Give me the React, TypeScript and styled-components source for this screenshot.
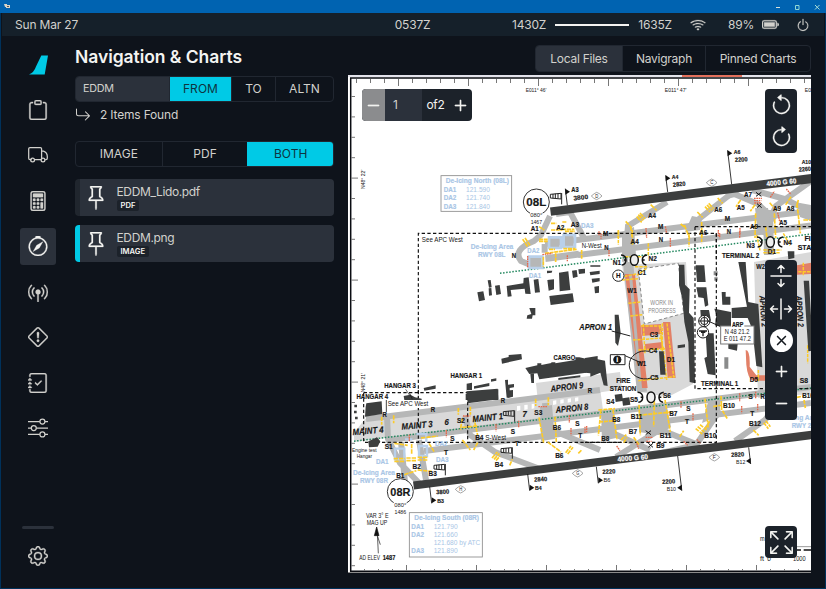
import React from 'react';
import styled, { createGlobalStyle } from 'styled-components';
import {
  BsClipboard, BsCalculator, BsCompass, BsBroadcastPin, BsExclamationDiamond,
  BsJournalCheck, BsGear, BsWifi, BsBatteryFull, BsPower, BsPin, BsArrowReturnRight,
  BsArrowCounterclockwise, BsArrowClockwise, BsPlus, BsDash, BsArrowsFullscreen, BsX,
} from 'react-icons/bs';

const color = {
  body: '#0e131b',
  bar: '#15202a',
  panel: '#2b313b',
  line: '#212731',
  text: '#d2d1cd',
  bright: '#f4f4f2',
  accent: '#00cae6',
  control: '#1c222a',
};

const GlobalStyle = createGlobalStyle`
  * { box-sizing: border-box; }
  body { margin: 0; background: ${color.body}; overflow: hidden; }
  svg { display: block; flex: none; }
`;

const Window = styled.div`
  width: 826px;
  height: 589px;
  display: flex;
  flex-direction: column;
  background: ${color.body};
  color: ${color.text};
  font: 12px/16px Inter, sans-serif;
  border: solid #00315a;
  border-width: 0 1px 1px;
`;

const TitleBar = styled.header`
  height: 13px;
  flex: none;
  margin: 0 -1px;
  padding: 0 5px 0 4px;
  display: flex;
  align-items: center;
  justify-content: space-between;
  background: #0063b1;
`;

const StatusBar = styled.div`
  height: 23px;
  flex: none;
  display: grid;
  grid-template-columns: 1fr auto 1fr;
  align-items: center;
  padding: 0 14px 0 13px;
  margin: 0 1px;
  letter-spacing: -0.18px;
  background: ${color.bar};
`;

const StatusGroup = styled.div`
  display: flex;
  align-items: center;
  justify-content: flex-end;
  svg { stroke: currentColor; stroke-width: 0.25; }
`;

const FlightLine = styled.span`
  width: 74px;
  height: 2px;
  margin: 0 9px;
  background: ${color.bright};
`;

const Gap = styled.span<{ $w: number }>`
  width: ${p => p.$w}px;
`;

const Body = styled.div`
  flex: 1;
  display: flex;
  min-height: 0;
`;

const Sidebar = styled.nav`
  width: 74px;
  display: flex;
  flex-direction: column;
  align-items: center;
  padding: 18px 0 4.5px;
`;

const Logo = styled.div`
  height: 37.5px;
  padding-left: 2px;
`;

const NavItem = styled.a<{ $active?: boolean }>`
  width: 36px;
  height: 36.5px;
  margin-bottom: 9px;
  display: grid;
  place-items: center;
  border-radius: 3px;
  color: ${p => (p.$active ? color.bright : color.text)};
  background: ${p => (p.$active ? color.panel : 'transparent')};
  svg { stroke: currentColor; stroke-width: 0.25; }
`;

const NavDivider = styled.div`
  width: 32px;
  height: 3px;
  border-radius: 2px;
  margin: auto 0 9.5px;
  background: ${color.panel};
`;

const Page = styled.main`
  flex: 1;
  display: flex;
  flex-direction: column;
  padding-right: 14px;
`;

const PageHead = styled.div`
  height: 39px;
  padding-top: 9px;
  display: flex;
  justify-content: space-between;
`;

const Title = styled.h1`
  margin: 0;
  font: 600 17.5px/24px Inter, sans-serif;
  letter-spacing: -0.05px;
  color: ${color.bright};
`;

const Segments = styled.div<{ $cols: string; $h?: number; $tight?: boolean }>`
  display: grid;
  grid-template-columns: ${p => p.$cols};
  height: ${p => p.$h ?? 26}px;
  border: 1px solid ${color.line};
  border-radius: 4px;
  overflow: hidden;
  letter-spacing: ${p => (p.$tight ? '-0.26px' : '0.05px')};
`;

const Segment = styled.button<{ $tone?: 'accent' | 'panel' }>`
  border: 0;
  border-left: 1px solid ${color.line};
  padding: 0;
  font: 12px/16px Inter, sans-serif;
  letter-spacing: inherit;
  color: ${p => (p.$tone === 'accent' ? '#0e3440' : color.text)};
  background: ${p => (p.$tone ? color[p.$tone] : 'transparent')};
  &:first-child { border-left: 0; }
  &:last-child { border-left-color: ${p => (p.$tone === 'accent' ? color.accent : color.line)}; }
`;

const SearchBox = styled.div`
  display: flex;
  align-items: center;
  padding-left: 7px;
  font-size: 10.8px;
  letter-spacing: -0.3px;
  background: ${color.panel};
`;

const Columns = styled.div`
  display: flex;
  justify-content: space-between;
`;

const FileColumn = styled.section`
  width: 259px;
  display: flex;
  flex-direction: column;
  padding-top: 0.6px;
`;

const Result = styled.div`
  display: flex;
  align-items: center;
  gap: 9px;
  margin: 5px 0 18.5px;
  height: 16px;
  letter-spacing: -0.18px;
`;

const FileCard = styled.article<{ $active?: boolean }>`
  height: 37px;
  margin-top: ${p => (p.$active ? 9 : 12)}px;
  display: flex;
  align-items: center;
  border-left: 5px solid ${p => (p.$active ? color.accent : '#20262e')};
  border-radius: 4px;
  background: ${color.panel};
  padding-left: 4px;
  svg { stroke: currentColor; stroke-width: 0.15; color: ${color.bright}; }
`;

const FileInfo = styled.div`
  padding-left: 8.5px;
  display: flex;
  flex-direction: column;
  align-items: flex-start;
  line-height: 14px;
  letter-spacing: -0.36px;
`;

const Badge = styled.span`
  height: 11px;
  margin-top: 1px;
  padding: 0 4px;
  border-radius: 2px;
  background: ${color.control};
  color: ${color.bright};
  font: 600 7.6px/11px Inter, sans-serif;
  letter-spacing: 0;
`;

const Viewer = styled.section`
  position: relative;
  width: 463px;
  height: 498px;
  overflow: hidden;
  background: #fff;
`;

const PageControl = styled.div`
  position: absolute;
  left: 14px;
  top: 14px;
  width: 110px;
  height: 32px;
  display: grid;
  grid-template-columns: 23px 37px 27px 23px;
  align-items: center;
  border-radius: 4px;
  overflow: hidden;
  background: ${color.control};
  color: ${color.text};
  svg { stroke: currentColor; stroke-width: 0.15; }
`;

const PageCell = styled.div<{ $bg?: string; $left?: boolean }>`
  height: 100%;
  display: flex;
  align-items: center;
  justify-content: ${p => (p.$left ? 'flex-start' : 'center')};
  padding-left: ${p => (p.$left ? 8 : 0)}px;
  font-size: 12px;
  letter-spacing: -0.3px;
  color: ${p => (p.$left ? color.text : color.bright)};
  background: ${p => p.$bg ?? 'transparent'};
`;

const ToolStack = styled.div<{ $top: number; $h: number; $pb?: number }>`
  position: absolute;
  left: 417px;
  top: ${p => p.$top}px;
  width: 32px;
  height: ${p => p.$h}px;
  padding-bottom: ${p => p.$pb ?? 0}px;
  display: flex;
  flex-direction: column;
  align-items: center;
  justify-content: space-around;
  border-radius: 4px;
  background: ${color.control};
  color: ${color.bright};
  svg { stroke: currentColor; stroke-width: 0.15; }
`;

const Round = styled.span`
  width: 23px;
  height: 23px;
  border-radius: 50%;
  display: grid;
  place-items: center;
  background: #fff;
  color: #14191f;
`;

const Turned = styled.span`
  transform: rotate(90deg);
`;

/* ---------- aerodrome chart ---------- */

type TProps = {
  x: number; y: number; w: number; s?: number; n?: boolean; i?: boolean; r?: number; c?: string; children: string;
};

const T = ({ x, y, w, s = 22.5, n, i, r = 0, c = '#171717', children }: TProps) => (
  <text
    x={x} y={y} fontSize={s} textLength={w} lengthAdjust="spacingAndGlyphs" textAnchor="middle"
    fontWeight={n ? 400 : 700} fontStyle={i ? 'italic' : 'normal'} fill={c}
    stroke={n ? 'none' : c} strokeWidth={0.5}
    transform={r ? `rotate(${r} ${x} ${y})` : undefined}
  >
    {children}
  </text>
);

const Sector = ({ x, y, children }: { x: number; y: number; children: React.ReactNode }) => (
  <g transform={`translate(${x} ${y}) scale(.33333)`}>{children}</g>
);

const P = ({ d, c, w = 3, dash }: { d: string; c: string; w?: number; dash?: string }) => (
  <path d={d} fill="none" stroke={c} strokeWidth={w} strokeDasharray={dash} />
);

const ICE = '#a9c6e6';
const YEL = '#fccb28';
const RED = '#e5694c';
const TAXI = '#b6b7b7';
const APRON = '#d9d9d9';
const DARK = '#3c3e3e';
const SALMON = '#e28067';

const Flag = ({ x, y, len, down, left }: { x: number; y: number; len: number; down?: boolean; left?: boolean }) => {
  const k = down ? 1 : -1;
  const top = y + k * len;
  const sx = x + k * len * 0.12;
  const dir = left ? -14 : 14;
  return (
    <g>
      <P d={`M${x} ${y}L${sx} ${top}`} c="#111" w={2.5} />
      <path d={`M${sx} ${top - (down ? 18 : 0)}l${dir} 9l${-dir} 9z`} fill="#111" />
    </g>
  );
};

const Sock = ({ x, y }: { x: number; y: number }) => (
  <g stroke="#222" strokeWidth="3" fill="none">
    <path d={`M${x} ${y + 2}l32 -3v17l-32 -3zM${x + 8} ${y + 1}v13M${x + 15} ${y}v13M${x + 23} ${y}v14M${x + 34} ${y - 2}v34`} />
  </g>
);

const Diamond = ({ x, y, t }: { x: number; y: number; t: string }) => (
  <g>
    <path d={`M${x - 16} ${y}q9 -8 16 -11q9 3 16 11q-8 8 -16 11q-9 -3 -16 -11z`} fill="#fff" stroke="#777" strokeWidth="2" />
    <T x={x} y={y + 5} w={9} s={14} n>{t}</T>
  </g>
);

const Ring = ({ x, y }: { x: number; y: number }) => (
  <g fill="none" stroke="#111" strokeWidth="4.5">
    <ellipse cx={x} cy={y} rx="12" ry="16" fill="#eee" />
    <path d={`M${x - 40} ${y - 15}q15 1 15 15q0 14 -13 15M${x - 31} ${y}h8M${x + 38} ${y - 15}q-14 2 -14 15q0 13 12 15M${x + 22} ${y}h9`} />
  </g>
);

const Roundel = ({ x, y, t }: { x: number; y: number; t: string }) => (
  <g>
    <circle cx={x} cy={y} r="39" fill="#fff" stroke="#333" strokeWidth="3" />
    <T x={x} y={y + 12} w={60} s={35}>{t}</T>
  </g>
);

const range = (n: number) => Array.from({ length: n }, (_, k) => k);

const ChartSheet = () => (
  <svg width="463" height="498" viewBox="348 75 463 498" fontFamily="'Liberation Sans Narrow', 'Liberation Sans', sans-serif">
    <path fill="#fff" d="M348 75h463v498h-463z" />

    {/* aprons and taxiways spanning several sectors */}
    <g fill={APRON}>
      <path d="M365 419L600 388L603 410L354 442V433z" />
      <path d="M536 383L620 372L622 389L538 402z" />
      <path d="M622 265L686 262L693 384L668 397L640 392z" />
      <path d="M754 262L811 252V394L758 398z" />
    </g>
    <g fill="none" stroke={TAXI} strokeWidth="6">
      <path d="M545 244L811 211M578 255L811 225.500M366 419L600 390M388 440L811 387M424 451L811 403" />
      <path d="M550 216L541 235L534 241Q512 250 521 261L533 266M556 214L570 212L585 240M667 202L628 226L625 262M732 193L690 226M732 193L758 204L775 220M752 190L785 199L811 212M811 181L776 206L763 235" />
      <path d="M387 415L388 439L400 463L420 484M401 442L405 482M419 440L426 480M465 416L470 435L495 452L540 469M545 403L547 428L600 450M605 415L606 430L650 450M648 405L654 427L696 444M661 429L616 457M715 397L718 413L696 445L640 458M777 404L765 420L735 441" />
      <path d="M628 262L642 392M768 210L769 255" strokeWidth="10" />
    </g>
    <g fill={TAXI}>
      <path d="M622 232l12-5 2 28-14 3zM755 208l13 0 3 26h-13zM540 407l12-2 3 34-14 2zM601 412l13-2 2 28-14 3zM639 409l28-2 4 20-12 8-20-3zM708 402l13-4-2 18-17 7zM692 216l10 2-2 12-15 2zM725 192l14 0-4 5-8 2zM800 203l11 2v16l-11-4z" />
    </g>
    <path d="M550 207.5L811 174V183.2L551 215.8z" fill="#3c3e3e" />
    <path d="M413 481.5L811 430.8V439.3L414 489.5z" fill="#3c3e3e" />
    <path d="M500 273.3L811 234M354 441.2L811 388" fill="none" stroke="#23885f" strokeWidth="1.5" strokeDasharray="1.5 1.6" />

    {/* north west */}
    <Sector x={345} y={70}>
      <T x={573} y={67} w={62} s={16} n>E011° 46′</T>
      <T x={60} y={328} w={58} s={16} n r={-90}>N48° 22′</T>
      <rect x="288" y="317" width="212" height="107" fill="#fff" stroke="#888" strokeWidth="2.5" />
      <T x={397} y={340} w={190} c={ICE}>De-Icing North (08L)</T>
      {['121.590', '121.740', '121.840'].map((f, k) => (
        <g key={f}>
          <T x={315} y={366 + k * 25} w={38} c={ICE}>{`DA${k + 1}`}</T>
          <T x={399} y={366 + k * 25} w={72} n c={ICE}>{f}</T>
        </g>
      ))}
      <Roundel x={574} y={396} t="08L" />
      <path d="M555 427h38v14h-38z" fill="#fff" />
      <T x={574} y={441} w={36} s={18} n>080°</T>
      <T x={574} y={463} w={34} s={18} n>1467</T>
      <Sock x={616} y={371} />
      <Flag x={667} y={406} len={50} />
      <T x={690} y={365} w={22} s={19}>A3</T>
      <T x={708} y={389} w={44} s={19} r={-7}>3800</T>
      <T x={727} y={474} w={38} c={ICE}>DA3</T>
    </Sector>

    {/* north east */}
    <Sector x={585} y={70}>
      <T x={272} y={67} w={65} s={16} n>E011° 47′</T>
      <T x={692} y={67} w={65} s={16} n>E011° 48′</T>
      <Flag x={248} y={366} len={50} />
      <T x={270} y={326} w={20} s={18}>A4</T>
      <T x={283} y={349} w={38} s={19} r={-5}>2820</T>
      <Flag x={440} y={343} len={102} />
      <T x={456} y={252} w={20} s={18}>A6</T>
      <T x={469} y={275} w={38} s={19} r={-3}>2200</T>
      <T x={664} y={281} w={28} s={18}>A10</T>
      <T x={660} y={304} w={36} s={19} r={-4}>2260</T>
      <T x={590} y={344} w={90} s={21} r={-6} c="#fff">4000 G 60</T>
      <Diamond x={35} y={378} t="D" />
      <Diamond x={380} y={338} t="C" />
      <P d="M197 404l18 17M155 440l15 17M160 434l15 17M165 429l15 17M122 454l18 20M398 384l15 16M360 410l15 16M366 405l15 16M371 400l15 16M337 426l16 16M287 462l15 12M467 390l-14 20M510 404l-14 20M512 430l-2 74M542 470l4 34M554 398l22 26M568 430l4 74M618 380l-16 24M640 390l-6 22M636 400l10 90M100 480v24M137 470l5 34M350 456v48M298 465l16 40M655 450h22" c={YEL} w={5} dash="14 3" />
      <P d="M556 382l12-18M604 357l14 16M578 428l6 26M241 469l4 22M183 474l2 30M404 489v16M464 484v20M48 490v16M507 385h24M507 392h22M508 399h20" c={RED} w={4} dash="5 2" />
      <path d="M513 367l16 12m0-12l-16 12M516 401l14 12m0-12l-14 12" stroke="#111" strokeWidth="3" />
      <T x={201} y={445} w={24}>A4</T>
      <T x={400} y={427} w={24}>A6</T>
      <T x={467} y={421} w={24}>A5</T>
      <T x={489} y={381} w={24}>A7</T>
      <T x={576} y={423} w={24}>A9</T>
      <T x={616} y={423} w={25}>A8</T>
      <T x={507} y={476} w={24}>A9</T>
      <T x={594} y={466} w={24}>A5</T>
      <T x={227} y={476} w={16}>M</T>
      <T x={427} y={452} w={16}>M</T>
    </Sector>

    {/* west */}
    <Sector x={345} y={230}>
      <P d="M220 510V10H1114V90" c="#111" w={3.5} dash="10 7" />
      <T x={292} y={36} w={123} n s={22}>See APC West</T>
      <T x={441} y={57} w={128} c={ICE}>De-Icing Area</T>
      <T x={440} y={82} w={82} c={ICE}>RWY 08L</T>
      <T x={507} y={83} w={13}>N</T>
      <path fill={TAXI} d="M554 80h38v32h-38zM590 42h18v26h-18zM600 76l100-14 8 20-106 14zM614 24h30v30h-30zM658 18h28v30h-28z" />
      <g fill="none" stroke="#b9d0ea" strokeWidth="8">
        <path d="M552 80h40v34h-40zM612 22h36v32h-36zM656 15h34v36h-34z" />
      </g>
      <P d="M533 28l15 22M540 24l15 22M582 34h26M582 28h26M660 4h30M595 80v30M632 70v26M612 58h18M655 56h36M710 60v28M600 70l95-12M618 0h34M618 -20h16M652 -24h14M652 -2h36M582 -10l16 10" c={YEL} w={5} dash="12 2" />
      <P d="M548 78v36M667 76v18M592 74l30-4" c={RED} w={4} dash="5 2" />
      <T x={569} y={4} w={24}>A1</T>
      <T x={646} y={1} w={25}>A2</T>
      <T x={690} y={-10} w={25}>A3</T>
      <T x={565} y={70} w={36} c={ICE}>DA2</T>
      <T x={570} y={143} w={36} c={ICE}>DA1</T>
      <g fill={DARK}>
        <path d="M397 187l18-3 5 26-18 4zM428 151l9-1 3 22-8 1zM431 175l8-1 2 22-9 1zM450 167l14-2 4 27-14 3zM485 168l50-8 1-16 15-2 6 50-16-1-2-15-42 4 3 19-12 1zM566 149l14-2 5 40-15 1zM642 128l28-4 6 56-32 4zM613 198l70-8 4 26-70 9zM607 150l20-2v30l-16 4zM681 122l14-2 3 20-14 4zM700 118l20-2v14l-18 2zM606 122l16 0-2 6-14 2zM553 234h18v22h-8l-2 10h-16l2-10 12-4z" />
        <path d="M469 386l22-5v-6l38-3 2 16-60 13zM541 414l36-8v-6h12v5l30-6v-2l12 0v3l60-10v-8h12l20 4v42l-140 20-6-18-24 2zM365 461l16-3v22h-16zM387 469l46-10v9l-46 8zM438 448l16-3v7l-16 3zM480 450l9-1v15l18-2v10l-13 2v28l-9 1zM362 492l98-14v32h-98zM236 474l36-8v10l-34 6zM180 500l12-2 2 12h-12zM556 432l11-1v28h-8zM640 444l66-8v6l-66 8z" />
      </g>
      <T x={364} y={444} w={95}>HANGAR 1</T>
      <T x={165} y={475} w={95}>HANGAR 3</T>
      <P d="M182 478l20 30" c="#222" w={2} />
      <T x={658} y={391} w={65}>CARGO</T>
      <T x={667} y={480} w={98} s={27} i r={-7}>APRON 9</T>
      <T x={61} y={458} w={58} s={16} n r={-90}>N48° 21′</T>
    </Sector>

    {/* east */}
    <Sector x={585} y={230}>
      <path d="M160 118l120-18 16 150-118 32z" fill="#fff" stroke="#888" strokeWidth="3" strokeDasharray="10 7" />
      <path d="M120 132h30l38 342h-24zM168 286l60-4 4 30-60 6zM180 342l52-6v20l-52 4zM234 276h22l16 168h-24zM482 360q14 0 12 50l20 26h26v16h-36q-16-6-20-48zM636 106l42-8v34l-42 2z" fill={SALMON} />
      <path d="M132 134h9l30 340h-9z" fill={TAXI} />
      <P d="M105 142l48-10M110 150l50-4M130 220l36-4M136 258l36-4M144 330l90-6M160 360l80-4M168 288h60M232 280v84M160 452l110-12M175 282l5 90M224 288l8 60M246 280l20 160M150 110h38M184 116l-28 20M235 350l10 100M520 420v34M535 60h54M535 68h50M515 15l10 46M595 10l20 36M655 98v40M668 346v54M640 125h38M100 4v40M142 0v44M190 40v36M120 80h50M312 10v40M350 0v40" c={YEL} w={4.5} dash="10 3" />
      <P d="M42 4v14M72 60v20M256 24v28M400 0v20M465 -6v22" c={RED} w={4} dash="5 2" />
      <g fill={DARK}>
        <path d="M282 104h16l2 60 14 14-2 70 14 16 4 196-16-4-4-120-12-60-6-70-10-40zM332 106h26l4 50h-26zM334 172h30l6 54-10 4-4-26-16-2zM346 240h26l6 32-30-4zM362 310h24l6 126-24-4-10-48 8-4zM460 96h22l8 120 30 6 12 190-18-4-12-110-14-34h-48v-30l46-4zM410 186h12v14h14v24h-24zM388 236l50 10v50l-48-10 4-30zM430 322h30l-4 40-26-6zM89 254h12l6 56-8 38-8-10zM0 384l38-6v10l22 4 8 76-12-2-10-38-30 12v-10l-16-2zM222 364h14l6 70h-16zM278 346l22-3v9l-22 3zM656 152h16l12 210-14 2zM608 64l20 0v20l-18 4zM16 106h30v4h-30zM14 126l30-4v10l-28 4zM20 146l24-2v10l-22 4zM28 170l14-2v20l-12 2z" />
        <path d="M386 124h12v12h-12zM388 142h10v10h-10zM418 382h12v34h-12z" opacity=".6" />
      </g>
      <P d="M330 -10V476H680M394 10V476M330 -10H680" c="#111" w={3.5} dash="10 7" />
      <T x={230} y={224} w={68} s={20} n c="#888">WORK IN</T>
      <T x={231} y={250} w={82} s={20} n c="#888">PROGRESS</T>
      <Ring x={148} y={90} />
      <Ring x={556} y={36} />
      <path d="M192 364A48 42 0 1 0 198 444" fill="none" stroke="#222" strokeWidth="3" />
      <circle cx="100" cy="137" r="17" fill="#fff" stroke="#222" strokeWidth="3" />
      <T x={100} y={145} w={14} s={23}>H</T>
      <g fill="#fff" stroke="#222" strokeWidth="3">
        <circle cx="358" cy="273" r="17" /><circle cx="358" cy="273" r="11" /><path d="M341 273h34M358 256v34M369 273l36 16M80 303l56 15" />
        <circle cx="354" cy="307" r="17" /><path d="M342 303h24M348 307h13M354 303v16" strokeWidth="4" />
        <path d="M76 374h44v30h-44zM120 377l50 22" /><circle cx="97" cy="389" r="11" fill="#111" />
        <rect x="407" y="288" width="100" height="54" stroke="#777" />
      </g>
      <T x={97} y={396} w={6} s={19} c="#fff">i</T>
      <path d="M438 274h40v18h-40z" fill="#fff" />
      <T x={458} y={291} w={34} s={20}>ARP</T>
      <T x={456} y={311} w={74} s={21} n>N 48 21.2</T>
      <T x={457} y={333} w={82} s={21} n>E 011 47.2</T>
      <T x={149} y={43} w={25}>A4</T>
      <T x={62} y={17} w={16}>M</T>
      <T x={355} y={15} w={24}>A6</T>
      <T x={228} y={37} w={13}>N</T>
      <T x={432} y={13} w={13}>N</T>
      <T x={64} y={59} w={13}>N</T>
      <T x={20} y={54} w={60} n>N-West</T>
      <T x={96} y={105} w={25}>N1</T>
      <T x={203} y={94} w={25}>N2</T>
      <T x={497} y={54} w={25}>N3</T>
      <T x={608} y={44} w={25}>N4</T>
      <T x={561} y={72} w={25}>D1</T>
      <T x={668} y={32} w={19}>FI</T>
      <T x={664} y={61} w={52}>STAT</T>
      <T x={171} y={135} w={25}>C1</T>
      <T x={141} y={188} w={28}>W1</T>
      <T x={170} y={408} w={28}>W1</T>
      <T x={207} y={321} w={25}>C3</T>
      <T x={204} y={370} w={25}>C4</T>
      <T x={208} y={450} w={25}>C5</T>
      <T x={258} y={397} w={25}>D1</T>
      <T x={507} y={457} w={25}>D5</T>
      <T x={527} y={118} w={26}>W2</T>
      <T x={467} y={85} w={112}>TERMINAL 2</T>
      <T x={404} y={469} w={112}>TERMINAL 1</T>
      <T x={32} y={301} w={98} s={27} i>APRON 1</T>
      <T x={527} y={245} w={94} s={25} i r={86}>APRON 2</T>
      <T x={636} y={245} w={94} s={25} i r={86}>APRON 2</T>
      <T x={115} y={458} w={42}>FIRE</T>
      <T x={114} y={484} w={80}>STATION</T>
      <T x={15} y={488} w={13}>R</T>
      <T x={657} y={459} w={25}>S8</T>
    </Sector>

    {/* south west */}
    <Sector x={345} y={390}>
      <P d="M56 8H368V158M56 8V157H830M220 0V157" c="#111" w={3.5} dash="10 7" />
      <g fill={DARK}>
        <path d="M64 40l46-6 2 38-52 8 2-30zM364 4l94-8 2 32-92 12zM176 18l20-4 14 8 20 4v12l-50 4zM70 154l26-12 10 12-8 16-26 2zM486 2l18-2v20l-16 4zM28 44h8v8h-8zM27 62h8v8h-8zM30 80h8v8h-8zM128 34l16-2v20h-16z" />
      </g>
      <g fill="none" stroke="#b9d0ea" strokeWidth="7">
        <path d="M150 176h28v32h-28zM222 168h24v30h-24zM214 132h30v24M180 148h22" />
      </g>
      <P d="M146 206h34M148 214h30M184 204h32M184 212h32M218 202h32M218 210h32M110 80v24M146 76v24M352 86l-6 34M386 82l12 54M352 112l46-4M352 150l24 30M398 158l-12 22M441 204l16-18M447 208l16-18M453 212l12-14M494 226l8-18M340 54v20M376 50v24M572 26v22M610 22v24M582 82l14 76M630 80l4 76M608 156l40 30M662 188l16-20M668 192l16-20M178 254l36-12M218 240l42 4M252 160l16 26M200 162v30M228 144l50-6M148 160l40 6M700 190l10-10" c={YEL} w={5} dash="13 3" />
      <P d="M193 134v22M304 120v22M453 102v22M521 92v22M673 76v22M678 114v22M354 78h22M580 50h26" c={RED} w={4} dash="5 2" />
      <g fill="#fff"><path d="M516 48l10-1v14l-10 2zM538 45l10-1v14l-10 2zM560 42l8-1v14l-8 2zM624 32l10-1v12l-10 2zM646 29l10-1v11l-10 2zM668 26l10-1v11l-10 2zM690 23l10-1v11l-10 2z" /></g>
      <T x={82} y={26} w={95}>HANGAR 4</T>
      <path d="M126 30h120v24h-120z" fill="#fff" />
      <P d="M124 30v36M202 28l-8-18" c="#222" w={2.5} />
      <T x={189} y={49} w={122} n s={22}>See APC West</T>
      <T x={119} y={81} w={13}>R</T>
      <T x={264} y={67} w={13}>R</T>
      <T x={474} y={40} w={13}>R</T>
      <T x={70} y={132} w={94} s={27} i r={-5}>MAINT 4</T>
      <T x={217} y={115} w={94} s={27} i r={-5}>MAINT 3</T>
      <T x={305} y={106} w={13} s={27} i>6</T>
      <T x={429} y={92} w={92} s={27} i r={-6}>MAINT 1</T>
      <T x={539} y={80} w={13} s={27} i>7</T>
      <T x={682} y={64} w={98} s={27} i r={-6}>APRON 8</T>
      <T x={348} y={100} w={24}>S2</T>
      <T x={580} y={74} w={24}>S3</T>
      <T x={131} y={177} w={24}>S1</T>
      <T x={322} y={153} w={13}>S</T>
      <T x={504} y={132} w={13}>S</T>
      <T x={697} y={107} w={13}>S</T>
      <T x={303} y={194} w={12}>T</T>
      <T x={516} y={169} w={12}>T</T>
      <T x={706} y={145} w={12}>T</T>
      <T x={403} y={151} w={25}>B4</T>
      <T x={452} y={149} w={63} n>S-West</T>
      <T x={462} y={232} w={25}>B4</T>
      <T x={636} y={120} w={25}>B6</T>
      <T x={643} y={203} w={25}>B6</T>
      <T x={215} y={238} w={25}>B2</T>
      <T x={263} y={257} w={25}>B3</T>
      <T x={166} y={264} w={25}>B1</T>
      <T x={58} y={186} w={74} s={17} n>Engine test</T>
      <T x={58} y={203} w={46} s={17} n>Hangar</T>
      <T x={112} y={223} w={38} c={ICE}>DA1</T>
      <T x={292} y={216} w={38} c={ICE}>DA3</T>
      <T x={289} y={167} w={38} c={ICE}>DA2</T>
      <T x={87} y={254} w={126} c={ICE}>De-Icing Area</T>
      <T x={87} y={278} w={84} c={ICE}>RWY 08R</T>
      <Sock x={475} y={63} />
      <Sock x={468} y={174} />
      <Sock x={267} y={224} />
      <Roundel x={166} y={305} t="08R" />
      <path d="M146 336h39v14h-39z" fill="#fff" />
      <T x={166} y={350} w={36} s={18} n>080°</T>
      <T x={166} y={372} w={35} s={18} n>1486</T>
      <Flag x={254} y={290} len={50} down />
      <T x={293} y={312} w={39} s={19} r={-3}>3800</T>
      <T x={287} y={339} w={20} s={18}>B3</T>
      <Flag x={548} y={252} len={50} down />
      <T x={587} y={274} w={39} s={19} r={-3}>2840</T>
      <T x={580} y={300} w={20} s={18}>B4</T>
      <Diamond x={347} y={298} t="H" />
      <Diamond x={698} y={250} t="G" />
      <T x={97} y={385} w={68} n s={20}>VAR 3° E</T>
      <T x={96} y={404} w={62} n s={20}>MAG UP</T>
      <path d="M95 411l7 26h-14zM97 430l3 60M98 440l8 24" fill="#111" stroke="#111" strokeWidth="2" />
      <T x={74} y={511} w={62} n s={21}>AD ELEV</T>
      <T x={132} y={511} w={38} s={21}>1487</T>
      <rect x="193" y="368" width="219" height="133" fill="#fff" stroke="#888" strokeWidth="2.5" />
      <T x={305} y={391} w={194} c={ICE}>De-Icing South (08R)</T>
      <T x={218} y={417} w={38} c={ICE}>DA1</T>
      <T x={218} y={442} w={38} c={ICE}>DA2</T>
      <T x={218} y={490} w={38} c={ICE}>DA3</T>
      <T x={302} y={417} w={72} n c={ICE}>121.790</T>
      <T x={302} y={442} w={72} n c={ICE}>121.660</T>
      <T x={336} y={466} w={140} n c={ICE}>121.680 by ATC</T>
      <T x={302} y={490} w={72} n c={ICE}>121.890</T>
    </Sector>

    {/* south east */}
    <Sector x={585} y={390}>
      <path d="M89 14l22-3 2 14 20-3 3 22-22 3-2-14-20 3z" fill={DARK} />
      <P d="M394 0V157H0" c="#111" w={3.5} dash="10 7" />
      <P d="M40 60l50-4M42 96l48-4M48 60l-8 76M84 60l12 90M162 44l4 92M208 34l-2 76M240 30l16 96M160 76l100-10M108 150l16-16M116 158l10-16M284 140l12-18M332 116l20 16M338 110l20 16M345 104l20 16M360 26l10 90M408 18l2 40l18 30M385 50l30-6M374 94l-12 20M146 142l16 22M505 120l16 16M536 98l14 18M542 92l14 18M657 30l4 24M636 22l20-4" c={YEL} w={5} dash="12 3" />
      <P d="M288 34v20M324 70v22M464 10v24M470 48v22M518 42v22M512 5v22M0 110v20M5 108v20M95 168l10 14M155 160l6 16M296 154l12 12M336 148l10 12M182 142h22M184 154h16" c={RED} w={4} dash="5 2" />
      <path d="M182 122l16 12m0-12l-16 12M190 160l14 12m0-12l-14 12" stroke="#111" strokeWidth="3" />
      <Ring x={198} y={22} />
      <T x={76} y={43} w={24}>S4</T>
      <T x={147} y={35} w={24}>S5</T>
      <T x={246} y={25} w={24}>S6</T>
      <T x={94} y={97} w={24}>B8</T>
      <T x={61} y={153} w={24}>B8</T>
      <T x={155} y={86} w={35}>B11</T>
      <T x={265} y={77} w={25}>B7</T>
      <T x={144} y={133} w={25}>B7</T>
      <T x={242} y={143} w={35}>B11</T>
      <T x={226} y={175} w={25}>B9</T>
      <T x={432} y={54} w={36}>B10</T>
      <T x={376} y={144} w={36}>B10</T>
      <T x={510} y={108} w={36}>B12</T>
      <T x={669} y={25} w={34}>B10</T>
      <T x={310} y={64} w={13}>S</T>
      <T x={497} y={26} w={13}>S</T>
      <T x={533} y={26} w={13}>R</T>
      <T x={306} y={103} w={12}>T</T>
      <T x={502} y={79} w={12}>T</T>
      <T x={144} y={211} w={92} s={21} r={-5} c="#fff">4000 G 60</T>
      <Flag x={34} y={230} len={50} down />
      <T x={72} y={251} w={39} s={19} r={-3}>2220</T>
      <T x={66} y={276} w={21} s={18} n>B6</T>
      <Flag x={278} y={198} len={104} down left />
      <T x={251} y={281} w={39} s={19} r={-3}>2200</T>
      <T x={259} y={302} w={28} s={18} n>B10</T>
      <Flag x={491} y={172} len={50} down left />
      <T x={458} y={200} w={39} s={19} r={-3}>2820</T>
      <T x={467} y={222} w={28} s={18} n>B12</T>
      <Diamond x={388} y={202} t="F" />
      <T x={640} y={91} w={128} c={ICE}>De-Icing Area</T>
      <T x={660} y={115} w={80} c={ICE}>RWY 26L</T>
      <T x={532} y={452} w={14} s={22} n>m</T>
      <T x={531} y={513} w={12} s={22} n>ft</T>
      <T x={552} y={513} w={11} s={22} n>0</T>
      <T x={643} y={513} w={38} s={22} n>1000</T>
      <P d="M560 470h120" c="#999" w={3} />
      <P d="M560 480h120" c="#111" w={4} dash="24 8" />
    </Sector>

    {/* neat line and graticule ticks */}
    <path d="M348 75h463v2h-463z" fill="#e4e4ec" />
    <path d="M682 75h60v2h-60z" fill="#e4705c" />
    <path d="M811 78H350.7V571.3H811" fill="none" stroke="#0a0c12" strokeWidth="1.5" />
    <path d="M348 572.5h463" stroke="#8b8b8b" />
    <g stroke="#777" strokeWidth="1">
      {range(33).map(k => <path key={k} d={`M${356.5 + k * 14} 79v${k % 5 === 3 ? 7 : 4}`} />)}
      {range(33).map(k => <path key={k} d={`M${364.5 + k * 14} 571v${k % 5 === 3 ? -6 : -2}`} />)}
      {range(24).map(k => <path key={k} d={`M351 ${96.5 + k * 20.4}h${k % 5 === 4 ? 7 : 4}`} />)}
    </g>
  </svg>
);

/* ---------- page ---------- */

const Truck = ({ size }: { size: number }) => (
  <svg width={size} height={size} viewBox="0 0 20 20" fill="none">
    <g strokeWidth="1.250">
      <path d="M3.600 14.500H2Q.7 14.500 .7 13.200V3.800Q.7 2.500 2 2.500H12.300Q13.600 2.500 13.600 3.800V14.500M6.700 14.500H13M13.600 6.100H15.500Q19.300 7.500 19.300 11.500V13.200Q19.300 14.500 18 14.500H17.200" />
      <circle cx="4.600" cy="15" r="1.900" /><circle cx="15" cy="15" r="1.900" />
    </g>
  </svg>
);

const Sliders = ({ size }: { size: number }) => (
  <svg width={size} height={size} viewBox="0 0 20 20" fill="none">
    <g strokeWidth="1.250">
      <path d="M0 3.600H11.800M17 3.600H20M0 10H3.200M8.400 10H20M0 16.400H11.800M17 16.400H20" />
      <circle cx="14.400" cy="3.600" r="2.500" /><circle cx="5.800" cy="10" r="2.500" /><circle cx="14.400" cy="16.400" r="2.500" />
    </g>
  </svg>
);

const navIcons = [BsClipboard, Truck, BsCalculator, BsCompass, BsBroadcastPin, BsExclamationDiamond, BsJournalCheck, Sliders];

const SplitArrows = () => (
  <svg width="24" height="24" viewBox="0 0 24 24" fill="none">
    <g strokeWidth="1.500" strokeLinecap="round" strokeLinejoin="round">
      <path d="M2 12h20M12 8.500V1.500M9 4.500l3-3 3 3M12 15.500V22.500M9 19.500l3 3 3-3" />
    </g>
  </svg>
);

export default function App() {
  return (
    <Window>
      <GlobalStyle />
      <TitleBar>
        <svg width="7" height="5" viewBox="0 0 7 5"><path d="M0 0h3v1h3v3H2V3H1z" fill="#d9d5c8" /><path d="M3 2h2v1H3z" fill="#555" /></svg>
        <svg width="46" height="6" viewBox="0 0 46 6" fill="none">
          <path d="M1 3.500h4" stroke="#d8e2dc" />
          <path d="M20.500 1.500h3.500v4h-3.500z" stroke="#8fd7d4" />
          <path d="M40 1l4.500 4.500M44.500 1L40 5.500" stroke="#a7dcd6" />
        </svg>
      </TitleBar>
      <StatusBar>
        <span>Sun Mar 27</span>
        <span>0537Z</span>
        <StatusGroup>
          <span>1430Z</span><FlightLine /><span>1635Z</span>
          <Gap $w={18} /><BsWifi size={16} />
          <Gap $w={22} /><span>89%</span>
          <Gap $w={8} /><BsBatteryFull size={17} />
          <Gap $w={17} /><BsPower size={14} />
        </StatusGroup>
      </StatusBar>
      <Body>
        <Sidebar>
          <Logo>
            <svg width="20" height="21" viewBox="0 0 20 21">
              <path d="M12.300 1.500H19L15.700 20.500H0Q5 18.500 7 12.500z" fill={color.accent} />
            </svg>
          </Logo>
          {navIcons.map((Icon, k) => (
            <NavItem key={k} $active={k === 3}><Icon size={20} /></NavItem>
          ))}
          <NavDivider />
          <NavItem><BsGear size={20} /></NavItem>
        </Sidebar>
        <Page>
          <PageHead>
            <Title>Navigation &amp; Charts</Title>
            <Segments $cols="86px 83px 105px" $h={27} $tight>
              <Segment $tone="panel">Local Files</Segment>
              <Segment>Navigraph</Segment>
              <Segment>Pinned Charts</Segment>
            </Segments>
          </PageHead>
          <Columns>
            <FileColumn>
              <Segments $cols="93px 62px 44px 58px">
                <SearchBox>EDDM</SearchBox>
                <Segment $tone="accent">FROM</Segment>
                <Segment>TO</Segment>
                <Segment>ALTN</Segment>
              </Segments>
              <Result><BsArrowReturnRight size={16} /><span>2 Items Found</span></Result>
              <Segments $cols="1fr 1fr 1fr">
                <Segment>IMAGE</Segment>
                <Segment>PDF</Segment>
                <Segment $tone="accent">BOTH</Segment>
              </Segments>
              <FileCard>
                <BsPin size={24} />
                <FileInfo>EDDM_Lido.pdf<Badge>PDF</Badge></FileInfo>
              </FileCard>
              <FileCard $active>
                <BsPin size={24} />
                <FileInfo>EDDM.png<Badge>IMAGE</Badge></FileInfo>
              </FileCard>
            </FileColumn>
            <Viewer>
              <ChartSheet />
              <PageControl>
                <PageCell $bg="#8b8c8e"><BsDash size={23} /></PageCell>
                <PageCell $bg={color.panel} $left>1</PageCell>
                <PageCell>of2</PageCell>
                <PageCell><BsPlus size={23} /></PageCell>
              </PageControl>
              <ToolStack $top={14} $h={64}>
                <BsArrowCounterclockwise size={23} />
                <BsArrowClockwise size={23} />
              </ToolStack>
              <ToolStack $top={185} $h={160} $pb={1}>
                <SplitArrows />
                <Turned><SplitArrows /></Turned>
                <Round><BsX size={21} /></Round>
                <BsPlus size={23} />
                <BsDash size={23} />
              </ToolStack>
              <ToolStack $top={451} $h={32}>
                <BsArrowsFullscreen size={23} />
              </ToolStack>
            </Viewer>
          </Columns>
        </Page>
      </Body>
    </Window>
  );
}
